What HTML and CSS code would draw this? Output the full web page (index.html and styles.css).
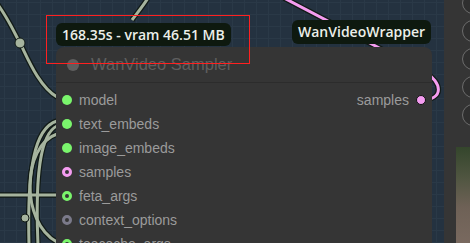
FILE: index.html
```html
<!DOCTYPE html>
<html lang="en">

<head>
    <meta charset="UTF-8">
    <title>WanVideo Sampler</title>
    <link rel="stylesheet" href="styles.css">
</head>

<body>

    <div id="app">
        <div id="graph">
            <svg class="wires" width="444" height="243" viewBox="0 0 444 243">
                <g class="wire-outline">
                    <path d="M -4 2 C 8 18, 14 32, 20 43 S 38 86, 57 97" />
                    <path d="M 148 -2 C 143 6, 138 12, 132 20" />
                    <path d="M 0 195 L 57 195" />
                    <path d="M 57 121 C 34 128, 27 170, 29 245" />
                    <path d="M 57 126 C 40 134, 35 176, 38 245" />
                    <path d="M 57 134 C 22 146, 20 222, 57 242" />
                </g>
                <g class="wire">
                    <path d="M -4 2 C 8 18, 14 32, 20 43 S 38 86, 57 97" />
                    <path d="M 148 -2 C 143 6, 138 12, 132 20" />
                    <path d="M 0 195 L 57 195" />
                    <path d="M 57 121 C 34 128, 27 170, 29 245" />
                    <path d="M 57 126 C 40 134, 35 176, 38 245" />
                    <path d="M 57 134 C 22 146, 20 222, 57 242" />
                </g>
                <circle class="joint" cx="20" cy="43" r="5" />
                <circle class="joint" cx="25" cy="218" r="4" />
                <path class="link-outline" d="M 421 100 C 445 100, 442 82, 425 72 L 284 -2" />
                <path class="link" d="M 421 100 C 445 100, 442 82, 425 72 L 284 -2" />
            </svg>

            <div class="badge badge-time">168.35s - vram 46.51 MB</div>
            <div class="badge badge-group">WanVideoWrapper</div>

            <div class="node">
                <div class="node-title">
                    <span class="title-dot"></span>
                    <span>WanVideo Sampler</span>
                </div>
                <div class="node-body">
                    <div class="slots">
                        <div class="slot"><span class="dot green"></span>model</div>
                        <div class="slot"><span class="dot green"></span>text_embeds</div>
                        <div class="slot"><span class="dot green"></span>image_embeds</div>
                        <div class="slot"><span class="dot pink ring"></span>samples</div>
                        <div class="slot"><span class="dot green ring"></span>feta_args</div>
                        <div class="slot"><span class="dot grey ring"></span>context_options</div>
                        <div class="slot"><span class="dot green ring"></span>teacache_args</div>
                    </div>
                    <div class="slots outputs">
                        <div class="slot">samples<span class="dot pink out"></span></div>
                    </div>
                </div>
            </div>

            <div class="highlight"></div>
        </div>

        <div id="sidebar">
            <span class="tool"></span>
            <span class="tool"></span>
            <span class="tool"></span>
            <span class="tool"></span>
            <span class="tool"></span>
            <div class="preview"></div>
        </div>
    </div>

</body>

</html>
```

FILE: styles.css
```css
body {
    margin: 0;
    font-family: "Liberation Sans", Arial, sans-serif;
    background-color: #243240;
}

#app {
    display: flex;
    width: 470px;
    height: 243px;
    overflow: hidden;
}

#graph {
    position: relative;
    width: 444px;
    height: 243px;
    flex-shrink: 0;
    background-color: #243240;
    background-image:
        linear-gradient(#2a3947 1px, transparent 1px),
        linear-gradient(90deg, #2a3947 1px, transparent 1px);
    background-size: 12px 12px;
    background-position: 4px 2px;
}

.wires {
    position: absolute;
    top: 0;
    left: 0;
}

.wire-outline path,
.link-outline {
    fill: none;
    stroke: #111a16;
    stroke-width: 5.5;
}

.wire path {
    fill: none;
    stroke: #a6b49e;
    stroke-width: 3;
}

.joint {
    fill: #a6b49e;
    stroke: #111a16;
    stroke-width: 1;
}

.link {
    fill: none;
    stroke: #f49cf0;
    stroke-width: 3;
}

/* Badges above the node */
.badge {
    position: absolute;
    background-color: #0e190f;
    color: #ecefe9;
    font-family: "Open Sans", sans-serif;
    font-weight: 600;
    font-size: 14px;
    border-radius: 6px;
    white-space: nowrap;
    z-index: 2;
}

.badge-time {
    left: 56px;
    top: 23px;
    height: 23px;
    line-height: 23px;
    padding: 0 6px;
}

.badge-group {
    left: 292px;
    top: 20px;
    height: 24px;
    line-height: 24px;
    padding: 0 6px;
}

/* Node */
.node {
    position: absolute;
    left: 56px;
    top: 47px;
    width: 376px;
    height: 220px;
    background-color: #353535;
    border-radius: 8px 8px 0 0;
    z-index: 1;
}

.node-title {
    display: flex;
    align-items: center;
    gap: 12px;
    height: 35px;
    padding-left: 11px;
    border-bottom: 1px solid #2c2c2c;
    color: #5f5f5f;
    font-size: 16.5px;
}

.title-dot {
    width: 12px;
    height: 12px;
    border-radius: 50%;
    background-color: #5f5f5f;
}

.node-body {
    display: flex;
    justify-content: space-between;
    padding: 5px 6px 0 6px;
}

.slot {
    display: flex;
    align-items: center;
    gap: 7px;
    height: 24px;
    color: #9b9b9b;
    font-size: 14px;
}

.dot {
    box-sizing: border-box;
    width: 10px;
    height: 10px;
    border-radius: 50%;
}

.dot.green {
    background-color: #7af56c;
}

.dot.pink {
    background-color: #f49cf0;
}

.dot.grey {
    background-color: #7b7a8a;
}

.dot.ring {
    border: 3px solid;
    background-color: #353535;
}

.dot.green.ring {
    border-color: #7af56c;
}

.dot.pink.ring {
    border-color: #f49cf0;
}

.dot.grey.ring {
    border-color: #7b7a8a;
}

.dot.out {
    border: 1px solid #111;
}

.highlight {
    position: absolute;
    left: 46px;
    top: 15px;
    width: 202px;
    height: 47px;
    border: 1px solid #ff2020;
    z-index: 3;
}

/* Right side panel */
#sidebar {
    flex: 1;
    display: flex;
    flex-direction: column;
    gap: 6px;
    background-color: #353535;
    padding-left: 18px;
}

.tool {
    box-sizing: border-box;
    flex-shrink: 0;
    width: 22px;
    height: 22px;
    border: 1px solid #6c6c6c;
    border-radius: 50%;
    background-color: #2f2f2f;
}

.tool:first-child {
    margin-top: -8px;
}

.preview {
    flex-shrink: 0;
    margin-top: 15px;
    margin-left: -6px;
    width: 20px;
    height: 100px;
    background: linear-gradient(#34462c, #4f5540 30%, #6e6156 60%, #7a6a60);
}
```
